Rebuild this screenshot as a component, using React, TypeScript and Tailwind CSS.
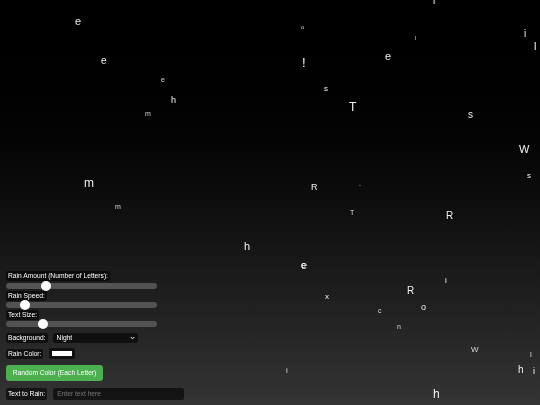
import type { ReactNode } from "react";

type Drop = { ch: string; x: number; y: number; size: number; c?: string };

// x, y are letter centres in the picture
const drops: Drop[] = [
  { ch: "e", x: 78, y: 22, size: 11 },
  { ch: "e", x: 104, y: 61, size: 10 },
  { ch: "e", x: 163, y: 80, size: 7, c: "#d5d5d5" },
  { ch: "h", x: 174, y: 101, size: 9 },
  { ch: "m", x: 148, y: 114, size: 7, c: "#d5d5d5" },
  { ch: "o", x: 303, y: 27, size: 6, c: "#d5d5d5" },
  { ch: "!", x: 304, y: 63, size: 13 },
  { ch: "s", x: 326, y: 89, size: 8 },
  { ch: "T", x: 352, y: 108, size: 12 },
  { ch: "e", x: 388, y: 57, size: 11 },
  { ch: "l", x: 416, y: 38, size: 6, c: "#d5d5d5" },
  { ch: "l", x: 434, y: 1, size: 10 },
  { ch: "i", x: 525, y: 34, size: 10 },
  { ch: "l", x: 536, y: 47, size: 11 },
  { ch: "s", x: 471, y: 115, size: 10 },
  { ch: "W", x: 524, y: 150, size: 11 },
  { ch: "s", x: 529, y: 176, size: 8 },
  { ch: "m", x: 89, y: 184, size: 12 },
  { ch: "m", x: 118, y: 207, size: 7, c: "#d5d5d5" },
  { ch: "R", x: 314, y: 188, size: 9 },
  { ch: ".", x: 360, y: 184, size: 7, c: "#d5d5d5" },
  { ch: "T", x: 352, y: 213, size: 7, c: "#dadada" },
  { ch: "R", x: 449, y: 216, size: 10 },
  { ch: "h", x: 247, y: 247, size: 11 },
  { ch: "e", x: 304, y: 266, size: 11 },
  { ch: "c", x: 304, y: 266, size: 9 },
  { ch: "i", x: 446, y: 281, size: 8 },
  { ch: "x", x: 327, y: 297, size: 8 },
  { ch: "R", x: 410, y: 291, size: 10 },
  { ch: "c", x: 380, y: 311, size: 7, c: "#dadada" },
  { ch: "o", x: 424, y: 308, size: 9 },
  { ch: "n", x: 399, y: 327, size: 7, c: "#dadada" },
  { ch: "W", x: 474, y: 350, size: 8, c: "#dadada" },
  { ch: "l", x: 531, y: 355, size: 8, c: "#dadada" },
  { ch: "h", x: 521, y: 370, size: 10 },
  { ch: "i", x: 534, y: 372, size: 9 },
  { ch: "i", x: 287, y: 371, size: 8, c: "#dadada" },
  { ch: "h", x: 436, y: 395, size: 12 },
];

const narrow = "il!.";

function Tag({ children, tall }: { children: ReactNode; tall?: boolean }) {
  return (
    <span
      className={
        tall
          ? "block h-[12px] w-fit rounded-[2px] bg-black/60 px-[2px] text-[6.7px] leading-[12px] text-white grayscale"
          : "block h-[10px] w-fit rounded-[2px] bg-black/60 px-[2px] text-[6.7px] leading-[10px] text-white grayscale"
      }
    >
      {children}
    </span>
  );
}

function Slider({ thumb }: { thumb: number }) {
  return (
    <div className="relative h-[6px] w-[151px] rounded-full bg-[#535353]">
      <div
        className="absolute top-[-2px] h-[10px] w-[10px] rounded-full bg-white"
        style={{ left: thumb - 5 }}
      />
    </div>
  );
}

export default function App() {
  return (
    <div className="relative h-[405px] w-[540px] overflow-hidden bg-linear-to-b from-black to-[#343434] font-['Liberation_Sans',Arial,sans-serif]">
      <div className="absolute inset-0 grayscale">
        {drops.map((d, i) => {
          const w = narrow.includes(d.ch) ? d.size * 0.28 : d.ch === "m" || d.ch === "W" ? d.size * 0.85 : d.size * 0.56;
          return (
            <span
              key={i}
              className="absolute leading-none"
              style={{
                left: Math.round(d.x - w / 2),
                top: Math.round(d.y - d.size * 0.55),
                fontSize: d.size,
                color: d.c ?? "#f2f2f2",
              }}
            >
              {d.ch}
            </span>
          );
        })}
      </div>

      <div className="absolute left-[6px] top-[271px] flex flex-col items-start text-[6.7px] leading-none">
        <Tag>Rain Amount (Number of Letters):</Tag>
        <div className="mt-[2px]">
          <Slider thumb={40} />
        </div>
        <div className="mt-[2px]">
          <Tag>Rain Speed:</Tag>
        </div>
        <div className="mt-px">
          <Slider thumb={19} />
        </div>
        <div className="mt-[2px]">
          <Tag>Text Size:</Tag>
        </div>
        <div className="mt-px">
          <Slider thumb={37} />
        </div>

        <div className="mt-[6px] flex items-center gap-[5px]">
          <Tag>Background:</Tag>
          <div className="flex h-[10px] w-[85px] items-center justify-between rounded-[2px] bg-black/60 pl-[4px] pr-[3px] text-white grayscale">
            <span>Night</span>
            <svg width="5" height="4" viewBox="0 0 10 8" fill="none">
              <path d="M1.5 2l3.5 3.5L8.5 2" stroke="white" strokeWidth="2" />
            </svg>
          </div>
        </div>

        <div className="mt-[5px] flex items-center gap-[6px]">
          <Tag>Rain Color:</Tag>
          <div className="flex h-[11px] w-[26px] items-center justify-center rounded-[2px] bg-black/60">
            <div className="h-[5px] w-[20px] bg-white" />
          </div>
        </div>

        <button
          type="button"
          className="mt-[6px] h-[16px] w-[97px] rounded-[3px] bg-[#4caf50] text-center text-[6.7px] leading-[16px] text-white"
        >
          <span className="grayscale">Random Color (Each Letter)</span>
        </button>

        <div className="mt-[7px] flex items-center gap-[6px]">
          <Tag tall>Text to Rain:</Tag>
          <div className="flex h-[12px] w-[131px] items-center rounded-[2px] bg-black/60 pl-[4px] text-[#777] grayscale">
            Enter text here
          </div>
        </div>
      </div>
    </div>
  );
}
